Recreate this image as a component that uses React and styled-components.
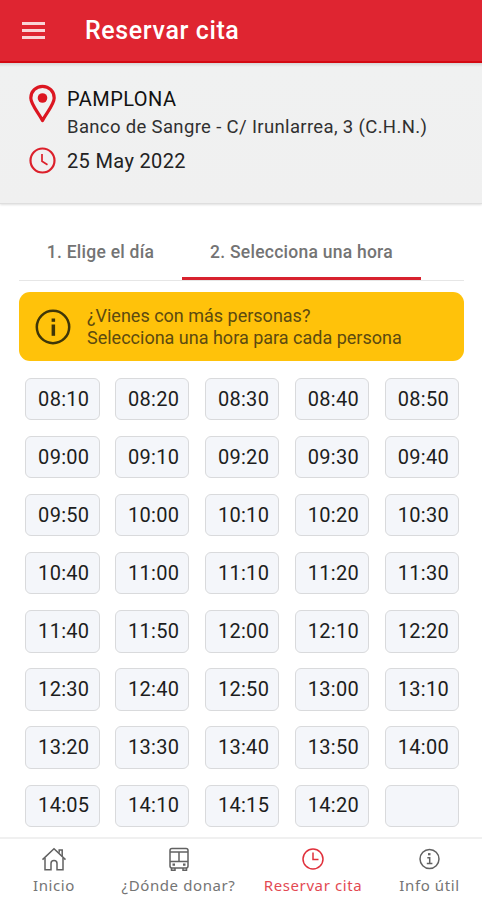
import React from 'react';
import styled, { createGlobalStyle } from 'styled-components';

const GlobalStyle = createGlobalStyle`
  * {
    box-sizing: border-box;
  }

  body {
    margin: 0;
    background: #ffffff;
    font-family: Roboto, 'Liberation Sans', sans-serif;
  }
`;

const Screen = styled.div`
  display: flex;
  flex-direction: column;
  width: 482px;
  height: 900px;
  overflow: hidden;
  background: #ffffff;
`;

const Header = styled.header`
  display: flex;
  align-items: center;
  flex-shrink: 0;
  height: 63px;
  padding: 0 22px;
  background: #df2531;
  border-bottom: 2px solid #d50a12;
`;

const MenuButton = styled.button`
  display: flex;
  flex-direction: column;
  gap: 4px;
  width: 23px;
  padding: 0;
  border: none;
  background: none;
`;

const MenuLine = styled.span`
  height: 3px;
  background: #f9d5d7;
`;

const Title = styled.h1`
  margin: 0 0 0 40px;
  font-size: 25px;
  line-height: 30px;
  font-weight: 500;
  letter-spacing: 0.62px;
  color: #ffffff;
`;

const Summary = styled.section`
  display: grid;
  grid-template-columns: 28px 1fr;
  column-gap: 11px;
  align-content: start;
  flex-shrink: 0;
  height: 141px;
  padding: 21px 20px 0 28px;
  background: linear-gradient(#d6d6d6 0, #f0f1f1 4px, #f0f0f0 100%);
  border-bottom: 1px solid #dedede;
  box-shadow: 0 1px 2px rgba(0, 0, 0, 0.12);
`;

const Place = styled.div`
  height: 63px;
`;

const City = styled.p`
  margin: 0;
  font-size: 20px;
  line-height: 30px;
  letter-spacing: 0.45px;
  color: #111111;
`;

const Address = styled.p`
  margin: 0;
  font-size: 18.5px;
  line-height: 26px;
  letter-spacing: 0.35px;
  white-space: nowrap;
  color: #303030;
`;

const DateText = styled.p`
  margin: 0;
  font-size: 20px;
  line-height: 29px;
  letter-spacing: 0.35px;
  color: #222222;
`;

const Tabs = styled.div`
  display: flex;
  flex-shrink: 0;
  height: 77px;
  margin: 0 18px 0 19px;
  padding: 20px 0 0;
  border-bottom: 1px solid #e6e6e6;
`;

const Tab = styled.button`
  display: flex;
  align-items: center;
  justify-content: center;
  width: ${(props) => props.$width};
  height: 56px;
  padding: 3px 0 0;
  border: none;
  border-bottom: 3px solid ${(props) => (props.$active ? '#d8222e' : 'transparent')};
  background: none;
  font: 500 17.5px/24px Roboto, sans-serif;
  letter-spacing: 0.25px;
  white-space: nowrap;
  color: #747474;
`;

const Notice = styled.div`
  display: flex;
  align-items: center;
  flex-shrink: 0;
  height: 69px;
  margin: 11px 18px 0 19px;
  padding-left: 16px;
  border-radius: 11px;
  background: #ffc20a;
`;

const NoticeText = styled.p`
  margin: 0 0 0 16px;
  font-size: 18px;
  line-height: 21.5px;
  letter-spacing: 0;
  white-space: nowrap;
  color: #5c4a10;
`;

const Slots = styled.div`
  display: grid;
  grid-template-columns: repeat(5, 74.5px);
  grid-auto-rows: 42.2px;
  column-gap: 15.4px;
  row-gap: 15.9px;
  padding: 17px 0 0 25px;
`;

const Slot = styled.button`
  display: flex;
  align-items: center;
  justify-content: center;
  padding: 0 0 1px 3px;
  border: 1.5px solid #d9dadc;
  border-radius: 6px;
  background: #f4f6fa;
  font: 400 20px/24px Roboto, sans-serif;
  letter-spacing: 0.3px;
  color: #1c1d20;
`;

const BottomNav = styled.nav`
  display: flex;
  flex-shrink: 0;
  height: 63px;
  margin-top: auto;
  border-top: 2px solid #f0f0f0;
  background: #ffffff;
`;

const NavItem = styled.a`
  display: flex;
  flex-direction: column;
  align-items: center;
  width: ${(props) => props.$width};
  padding-top: 8px;
  color: ${(props) => (props.$active ? '#e0303b' : '#626262')};
`;

const NavLabel = styled.span`
  margin-top: 4px;
  font-family: 'Noto Sans', sans-serif;
  font-size: 15px;
  line-height: 20px;
  letter-spacing: 0.6px;
  white-space: nowrap;
  opacity: 0.88;
`;

const PinIcon = () => (
  <svg width="28" height="40" viewBox="0 0 28 40" fill="none">
    <path
      d="M14.500 36.500C11 29.500 2.800 20.500 2.800 14a11.700 11.700 0 0 1 23.400 0c0 6.500-8.200 15.500-11.700 22.500Z"
      stroke="#dc1621"
      strokeWidth="3.200"
      strokeLinejoin="round"
    />
    <circle cx="14.500" cy="14" r="4.800" fill="#dc1621" />
  </svg>
);

const ClockIcon = () => (
  <svg width="28" height="28" viewBox="0 0 28 28" fill="none" stroke="#dc202b">
    <circle cx="14.500" cy="13.500" r="12" strokeWidth="2.200" />
    <path d="M14 7v7.300l5.500 3.400" strokeWidth="1.700" />
  </svg>
);

const InfoIcon = () => (
  <svg width="36" height="36" viewBox="0 0 36 36" fill="none">
    <circle cx="18" cy="18" r="16.200" stroke="#3f3608" strokeWidth="2.500" />
    <rect x="16.600" y="9.500" width="3.500" height="3.300" fill="#3f3608" />
    <rect x="16.600" y="15.500" width="3.500" height="11.300" fill="#3f3608" />
  </svg>
);

const NavIcon = ({ name }) => (
  <svg width="26" height="24" viewBox="0 0 26 24" fill="none" stroke="currentColor" strokeWidth="1.500">
    {name === 'home' && (
      <>
        <path d="M1.500 12.600 13 1.700l11.500 10.900" />
        <path d="M4 11v11.700h6v-6.200a3 3 0 0 1 6 0v6.200h6V11M18.200 5.800V3h3v6" />
      </>
    )}
    {name === 'bus' && (
      <>
        <rect x="4" y="1.500" width="18" height="19.500" rx="2" />
        <path d="M4 5h18M4 14.500h18M13 5v9.500M5.500 21v2.200h3.500V21M17 21v2.200h3.500V21" />
        <path d="M6.500 17.700h2.500M17 17.700h2.500" strokeWidth="2.200" />
      </>
    )}
    {name === 'clock' && (
      <>
        <circle cx="13" cy="12" r="10" />
        <path d="M13 5.500v7h5.500" />
      </>
    )}
    {name === 'info' && (
      <>
        <circle cx="12.500" cy="12" r="9.500" />
        <path d="M10.300 10.800h2.400v5.500M9.800 16.500h5.600" />
        <path d="M11 7.200h2.500" strokeWidth="2.200" />
      </>
    )}
  </svg>
);

const times = [
  '08:10', '08:20', '08:30', '08:40', '08:50',
  '09:00', '09:10', '09:20', '09:30', '09:40',
  '09:50', '10:00', '10:10', '10:20', '10:30',
  '10:40', '11:00', '11:10', '11:20', '11:30',
  '11:40', '11:50', '12:00', '12:10', '12:20',
  '12:30', '12:40', '12:50', '13:00', '13:10',
  '13:20', '13:30', '13:40', '13:50', '14:00',
  '14:05', '14:10', '14:15', '14:20', '',
];

const navItems = [
  { icon: 'home', label: 'Inicio', width: '108px' },
  { icon: 'bus', label: '¿Dónde donar?', width: '141px' },
  { icon: 'clock', label: 'Reservar cita', width: '128px', active: true },
  { icon: 'info', label: 'Info útil', width: '105px' },
];

const App = () => {
  return (
    <Screen>
      <GlobalStyle />
      <Header>
        <MenuButton aria-label="Menú">
          <MenuLine />
          <MenuLine />
          <MenuLine />
        </MenuButton>
        <Title>Reservar cita</Title>
      </Header>
      <Summary>
        <PinIcon />
        <Place>
          <City>PAMPLONA</City>
          <Address>Banco de Sangre - C/ Irunlarrea, 3 (C.H.N.)</Address>
        </Place>
        <ClockIcon />
        <DateText>25 May 2022</DateText>
      </Summary>
      <Tabs>
        <Tab $width="163px">1. Elige el día</Tab>
        <Tab $width="239px" $active>2. Selecciona una hora</Tab>
      </Tabs>
      <Notice>
        <InfoIcon />
        <NoticeText>
          ¿Vienes con más personas?
          <br />
          Selecciona una hora para cada persona
        </NoticeText>
      </Notice>
      <Slots>
        {times.map((time, index) => (
          <Slot key={index}>{time}</Slot>
        ))}
      </Slots>
      <BottomNav>
        {navItems.map((item) => (
          <NavItem key={item.label} $width={item.width} $active={item.active}>
            <NavIcon name={item.icon} />
            <NavLabel>{item.label}</NavLabel>
          </NavItem>
        ))}
      </BottomNav>
    </Screen>
  );
};

export default App;
